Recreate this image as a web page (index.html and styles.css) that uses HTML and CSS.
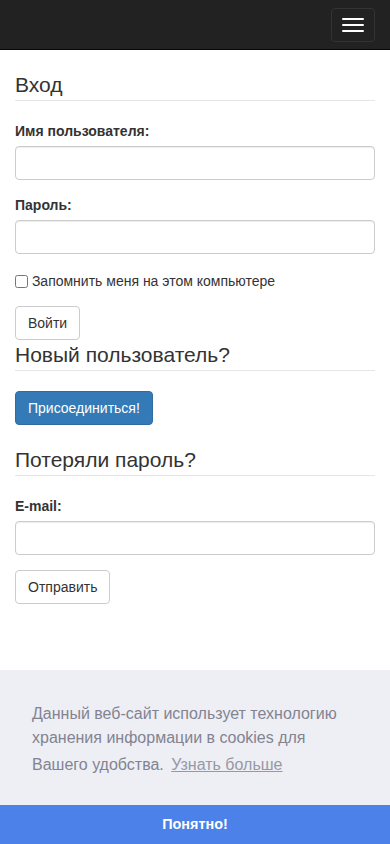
FILE: index.html
```html
<!DOCTYPE html>
<html lang="ru">
<head>
    <meta charset="UTF-8">
    <meta name="viewport" content="width=device-width, initial-scale=1.0">
    <title>Вход</title>
    <link rel="stylesheet" href="styles.css">
</head>
<body>
    <nav class="navbar">
        <button type="button" class="navbar-toggle" aria-label="Меню">
            <span class="icon-bar"></span>
            <span class="icon-bar"></span>
            <span class="icon-bar"></span>
        </button>
    </nav>

    <main class="container">
        <form class="login-form">
            <legend>Вход</legend>
            <div class="form-group">
                <label for="username">Имя пользователя:</label>
                <input type="text" id="username" class="form-control">
            </div>
            <div class="form-group">
                <label for="password">Пароль:</label>
                <input type="password" id="password" class="form-control">
            </div>
            <div class="form-group remember">
                <label class="check-label"><input type="checkbox" id="remember"> Запомнить меня на этом компьютере</label>
            </div>
            <button type="submit" class="btn">Войти</button>
        </form>

        <section>
            <legend>Новый пользователь?</legend>
            <a href="#" class="btn btn-primary">Присоединиться!</a>
        </section>

        <form class="lost-form">
            <legend>Потеряли пароль?</legend>
            <div class="form-group">
                <label for="email">E-mail:</label>
                <input type="email" id="email" class="form-control">
            </div>
            <button type="submit" class="btn">Отправить</button>
        </form>
    </main>

    <div class="cookie">
        <div class="cookie-msg">
            Данный веб-сайт использует технологию хранения информации в cookies для Вашего удобства.
            <a href="#" class="cookie-link">Узнать больше</a>
        </div>
        <a href="#" class="cookie-btn">Понятно!</a>
    </div>
</body>
</html>
```

FILE: styles.css
```css
* {
    box-sizing: border-box;
}

body {
    margin: 0;
    font-family: "Liberation Sans", Arial, sans-serif;
    font-size: 14px;
    line-height: 20px;
    color: #333;
    background-color: #fff;
}

.navbar {
    display: flex;
    justify-content: flex-end;
    height: 50px;
    background-color: #222;
    border-bottom: 1px solid #080808;
    margin-bottom: 20px;
}

.navbar-toggle {
    display: flex;
    flex-direction: column;
    gap: 4px;
    margin: 8px 15px 0 0;
    padding: 9px 10px;
    background: transparent;
    border: 1px solid #333;
    border-radius: 4px;
    height: 34px;
}

.icon-bar {
    display: block;
    width: 22px;
    height: 2px;
    border-radius: 1px;
    background-color: #fff;
}

.container {
    padding: 0 15px;
}

legend {
    display: block;
    width: 100%;
    padding: 0;
    margin-bottom: 20px;
    font-size: 21px;
    line-height: 30px;
    color: #333;
    border-bottom: 1px solid #e5e5e5;
}

.form-group {
    margin-bottom: 15px;
}

.form-group label {
    display: inline-block;
    margin-bottom: 5px;
    font-weight: bold;
}

.form-control {
    display: block;
    width: 100%;
    height: 34px;
    padding: 6px 12px;
    font: inherit;
    color: #555;
    background-color: #fff;
    border: 1px solid #ccc;
    border-radius: 4px;
    box-shadow: inset 0 1px 1px rgba(0, 0, 0, .075);
}

.remember {
    padding-top: 2px;
}

.form-group .check-label {
    font-weight: normal;
    margin-bottom: 0;
}

.check-label input {
    margin: 4px 0 0;
    vertical-align: top;
    width: 13px;
    height: 13px;
}

.btn {
    display: inline-block;
    padding: 6px 12px;
    font: inherit;
    color: #333;
    text-decoration: none;
    background-color: #fff;
    border: 1px solid #ccc;
    border-radius: 4px;
    cursor: pointer;
}

.btn-primary {
    color: #fff;
    background-color: #337ab7;
    border-color: #2e6da4;
}

.login-form .btn {
    vertical-align: top;
}

section {
    margin-bottom: 20px;
}

section .btn {
    vertical-align: top;
}

.cookie {
    margin-top: 66px;
    background-color: #edeff5;
    color: #838391;
    font-family: "Liberation Sans", Helvetica, Arial, sans-serif;
    font-size: 16px;
    line-height: 24px;
}

.cookie-msg {
    padding: 32px 32px 25px;
}

.cookie-link {
    display: inline-block;
    padding: 3px;
    line-height: 24px;
    color: #838391;
    opacity: .8;
    text-decoration: underline;
}

.cookie-btn {
    display: block;
    height: 39px;
    line-height: 39px;
    text-align: center;
    font-size: 14.4px;
    font-weight: bold;
    color: #fff;
    text-decoration: none;
    background-color: #4b81e8;
}
```
